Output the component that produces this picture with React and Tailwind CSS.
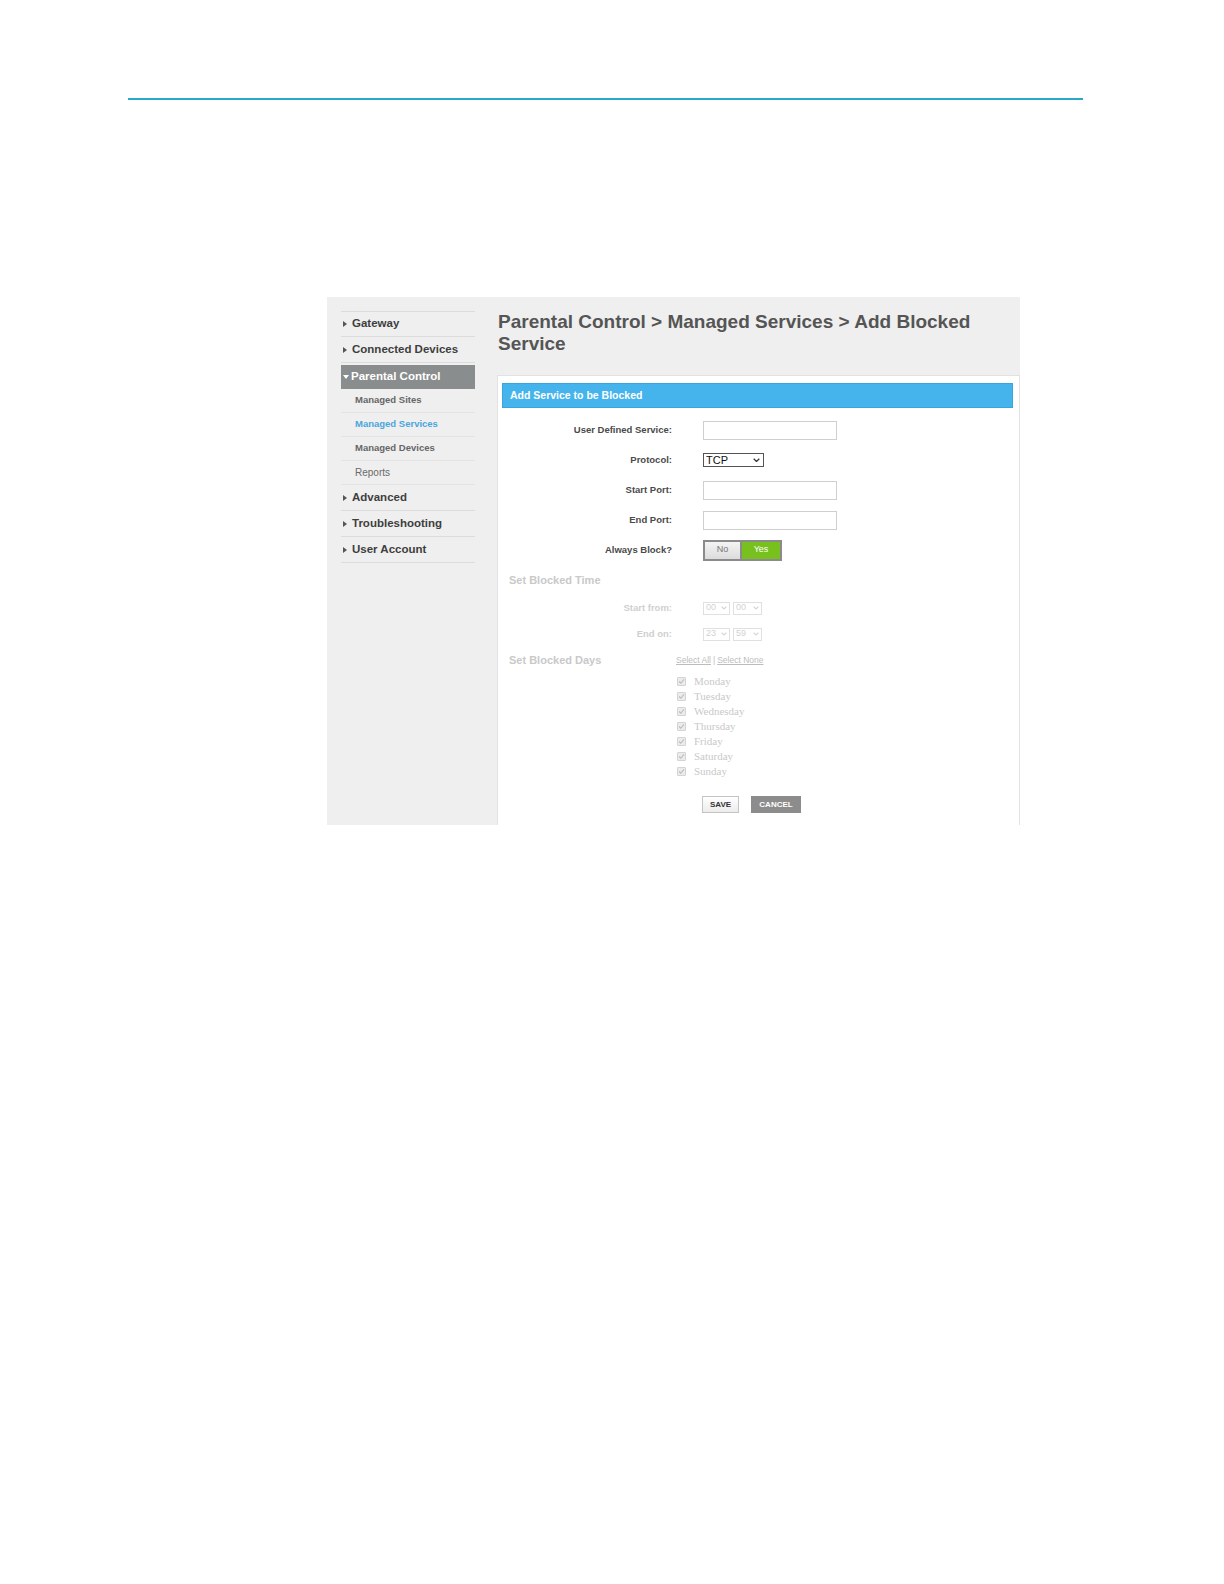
import React from "react";

const Arrow = ({ down, color = "#555" }) =>
  down ? (
    <svg width="6" height="4" viewBox="0 0 6 4" className="shrink-0">
      <path d="M0 0 L6 0 L3 4 Z" fill={color} />
    </svg>
  ) : (
    <svg width="4" height="6" viewBox="0 0 4 6" className="shrink-0">
      <path d="M0 0 L4 3 L0 6 Z" fill={color} />
    </svg>
  );

const MainItem = ({ label, top }) => (
  <div
    className={`flex items-center h-[26px] pl-[2px] border-b border-[#dcdcdc] ${
      top ? "border-t" : ""
    }`}
  >
    <Arrow />
    <span className="ml-[5px] text-[11.5px] font-bold text-[#3e3e3e]">{label}</span>
  </div>
);

const SubItem = ({ label, active, light }) => (
  <div className="flex items-center h-[24px] pl-[14px] border-b border-[#e4e4e4]">
    <span
      className={`${light ? "font-normal text-[10px]" : "font-bold text-[9.5px]"} ${
        active ? "text-[#4aa6dc]" : light ? "text-[#6a6a6a]" : "text-[#666]"
      }`}
    >
      {label}
    </span>
  </div>
);

const Row = ({ label, children }) => (
  <div className="flex items-center h-[30px]">
    <div className="w-[170px] text-right text-[9.5px] font-bold text-[#4a4a4a]">{label}</div>
    <div className="ml-[31px] flex items-center">{children}</div>
  </div>
);

const TextBox = () => (
  <input
    type="text"
    className="w-[134px] h-[19px] border border-[#cfcfcf] bg-white outline-none"
  />
);

const Chevron = ({ color = "#333", size = 7 }) => (
  <svg width={size} height={size * 0.6} viewBox="0 0 10 6" className="shrink-0">
    <path d="M1 1 L5 5 L9 1" fill="none" stroke={color} strokeWidth="1.8" />
  </svg>
);

const MiniSelect = ({ value, w }) => (
  <div
    className={`${w} h-[13px] border border-[#e0e0e0] bg-white flex items-center justify-between px-[2px] text-[9px] text-[#d2d2d2]`}
  >
    <span>{value}</span>
    <Chevron color="#d4d4d4" size={6} />
  </div>
);

const Day = ({ name }) => (
  <div className="flex items-center h-[15px]">
    <div className="ml-[1px] w-[9px] h-[9px] border border-[#d4d4d4] bg-[#ececec] rounded-[1px] flex items-center justify-center">
      <svg width="7" height="7" viewBox="0 0 10 10">
        <path d="M1.5 5 L4 7.5 L8.5 2" fill="none" stroke="#bdbdbd" strokeWidth="1.6" />
      </svg>
    </div>
    <span
      className="ml-[8px] text-[11px] text-[#c9c9c9]"
      style={{ fontFamily: '"Liberation Serif", serif' }}
    >
      {name}
    </span>
  </div>
);

export default function App() {
  return (
    <div
      className="bg-white"
      style={{ fontFamily: '"Liberation Sans", Arial, sans-serif' }}
    >
      <div className="pt-[98px] pl-[128px]">
        <div className="w-[955px] h-[2px] bg-[#2aa8c8]" />
      </div>

      <div className="mt-[197px] ml-[327px] w-[693px] h-[528px] bg-[#efefef] flex overflow-hidden">
        {/* sidebar */}
        <div className="w-[170px] shrink-0 pl-[14px] pr-[22px] pt-[14px]">
          <MainItem label="Gateway" top />
          <MainItem label="Connected Devices" />
          <div className="mt-[2px] h-[24px] bg-[#8a8d8d] flex items-center pl-[2px]">
            <Arrow down color="#fff" />
            <span className="ml-[2px] text-[11.5px] font-bold text-white">Parental Control</span>
          </div>
          <SubItem label="Managed Sites" />
          <SubItem label="Managed Services" active />
          <SubItem label="Managed Devices" />
          <SubItem label="Reports" light />
          <MainItem label="Advanced" />
          <MainItem label="Troubleshooting" />
          <MainItem label="User Account" />
        </div>

        {/* main */}
        <div className="flex-1 flex flex-col pt-[14px]">
          <h1 className="pl-[1px] w-[500px] text-[19px] leading-[22px] font-bold text-[#555]">
            Parental Control &gt; Managed Services &gt; Add Blocked Service
          </h1>

          <div className="mt-[20px] flex-1 bg-white border-l border-r border-t border-[#e2e2e2] pt-[7px] pl-[4px] pr-[6px]">
            <div className="h-[25px] bg-[#45b4ec] border border-[#3aa5dc] flex items-center pl-[7px]">
              <span className="text-[10.5px] font-bold text-white">Add Service to be Blocked</span>
            </div>

            <div className="mt-[7px]">
              <Row label="User Defined Service:">
                <TextBox />
              </Row>
              <Row label="Protocol:">
                <div className="w-[61px] h-[14px] border border-[#555] bg-white flex items-center justify-between pl-[2px] pr-[3px]">
                  <span className="text-[11px] leading-none text-[#111]">TCP</span>
                  <Chevron />
                </div>
              </Row>
              <Row label="Start Port:">
                <TextBox />
              </Row>
              <Row label="End Port:">
                <TextBox />
              </Row>
              <Row label="Always Block?">
                <div className="w-[79px] h-[21px] border-2 border-[#8b8b8b] flex">
                  <div className="w-[37px] bg-gradient-to-b from-[#f4f4f4] to-[#dcdcdc] border-r-2 border-[#8b8b8b] flex items-center justify-center text-[9px] text-[#777]">
                    No
                  </div>
                  <div className="flex-1 bg-[#78c01d] flex items-center justify-center text-[9px] text-white">
                    Yes
                  </div>
                </div>
              </Row>

              <div className="h-[30px] flex items-center pl-[7px] text-[11px] font-bold text-[#c9c9c9]">
                Set Blocked Time
              </div>

              <div className="flex items-center h-[26px]">
                <div className="w-[170px] text-right text-[9.5px] font-bold text-[#cfcfcf]">
                  Start from:
                </div>
                <div className="ml-[31px] flex gap-[3px]">
                  <MiniSelect value="00" w="w-[27px]" />
                  <MiniSelect value="00" w="w-[29px]" />
                </div>
              </div>
              <div className="flex items-center h-[26px]">
                <div className="w-[170px] text-right text-[9.5px] font-bold text-[#cfcfcf]">
                  End on:
                </div>
                <div className="ml-[31px] flex gap-[3px]">
                  <MiniSelect value="23" w="w-[27px]" />
                  <MiniSelect value="59" w="w-[29px]" />
                </div>
              </div>

              <div className="flex">
                <div className="w-[174px] pl-[7px] h-[26px] flex items-center text-[11px] font-bold text-[#c9c9c9]">
                  Set Blocked Days
                </div>
                <div className="flex flex-col">
                  <div className="h-[27px] flex items-center text-[8.5px] text-[#bdbdbd]">
                    <span className="underline">Select All</span>
                    <span className="mx-[2px]">|</span>
                    <span className="underline">Select None</span>
                  </div>
                  {["Monday", "Tuesday", "Wednesday", "Thursday", "Friday", "Saturday", "Sunday"].map(
                    (d) => (
                      <Day key={d} name={d} />
                    )
                  )}
                </div>
              </div>

              <div className="mt-[17px] pl-[200px] flex gap-[12px]">
                <button className="w-[37px] h-[17px] border border-[#c4c4c4] bg-gradient-to-b from-white to-[#ececec] text-[8px] font-bold text-[#333]">
                  SAVE
                </button>
                <button className="w-[50px] h-[17px] bg-[#8c8c8c] text-[8px] font-bold text-white">
                  CANCEL
                </button>
              </div>
            </div>
          </div>
        </div>
      </div>
    </div>
  );
}
